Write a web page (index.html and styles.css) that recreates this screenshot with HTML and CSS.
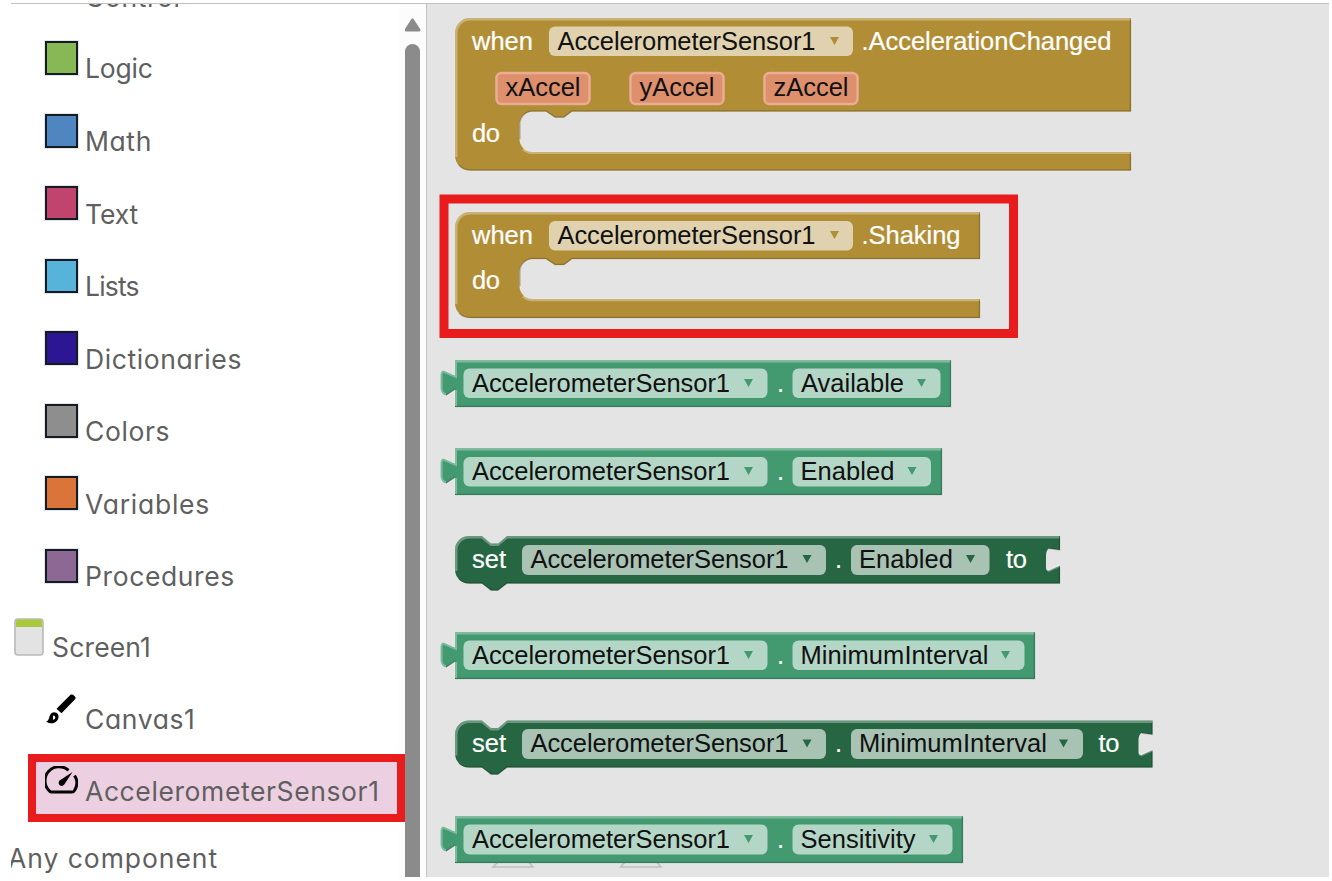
FILE: index.html
```html
<!DOCTYPE html>
<html lang="en">
<head>
<meta charset="utf-8">
<title>Blocks</title>
<link rel="stylesheet" href="styles.css">
</head>
<body>
<div class="app">
  <nav class="palette">
    <ul class="tree">
      <li class="row"><span class="swatch control"></span><span class="label t-control">Control</span></li>
      <li class="row"><span class="swatch logic"></span><span class="label t-logic">Logic</span></li>
      <li class="row"><span class="swatch math"></span><span class="label t-math">Math</span></li>
      <li class="row"><span class="swatch text"></span><span class="label t-text">Text</span></li>
      <li class="row"><span class="swatch lists"></span><span class="label t-lists">Lists</span></li>
      <li class="row"><span class="swatch dictionaries"></span><span class="label t-dictionaries">Dictionaries</span></li>
      <li class="row"><span class="swatch colors"></span><span class="label t-colors">Colors</span></li>
      <li class="row"><span class="swatch variables"></span><span class="label t-variables">Variables</span></li>
      <li class="row"><span class="swatch procedures"></span><span class="label t-procedures">Procedures</span></li>
      <li class="row screen">
        <svg class="icon screen-icon" viewBox="0 0 30 38"><rect x="1" y="1" width="28" height="36" rx="3" fill="#e3e3e3" stroke="#b9b9b9" stroke-width="1.6"/><path d="M2 9V3.500Q2 1.500 4 1.500H26Q28 1.500 28 3.500V9Z" fill="#a9c83b"/></svg>
        <span class="label t-screen">Screen1</span>
      </li>
      <li class="row">
        <svg class="icon" viewBox="0 0 33 33"><path d="M11.500 14.700L25.500 .8Q27.500 0 29.500 2T30.300 5L16.500 19.300Z"/><path d="M1 27.500C5.500 27.500 3 18.300 9 18.300C16.500 18.800 14 29.300 7 29.300C4.500 29.300 3 28.800 1 27.500Z"/><path d="M8 21.500c3-.3 3 4 0 4.200z" fill="#fff"/></svg>
        <span class="label t-canvas">Canvas1</span>
      </li>
      <li class="row selected">
        <svg class="icon" viewBox="0 0 33 33"><path d="M23.500 4.400A14 14 0 0 0 4.500 25Q5 26 6 26H27Q28.500 26 29.500 24.500A14 14 0 0 0 29.600 9.500" fill="none" stroke="#000" stroke-width="3"/><path d="M27.500 6L19.300 18.500Q17 21 14.500 19Q12.500 16.500 15 14.300Z"/></svg>
        <span class="label t-accel">AccelerometerSensor1</span>
      </li>
      <li class="row any"><span class="label t-any">Any component</span></li>
    </ul>
  </nav>
  <div class="scrollbar">
    <svg class="arrow-up" viewBox="0 0 17 14"><path d="M2 12L8.500 2L15 12Z" fill="#8b8b8b" stroke="#8b8b8b" stroke-width="3" stroke-linejoin="round"/></svg>
    <div class="thumb"></div>
  </div>
  <main class="flyout">
    <svg class="workspace" viewBox="428 4 901 873">
      <path class="ghost" d="M493 867H533L527 860H500ZM620.500 867H661L655 860H627Z"/>

      <g class="event" transform="translate(455 18)">
        <path class="body" d="M0 15A15 15 0 0 1 15 0H676V93.500H117L109 99.500H100L91 93.500H77.500A13 13 0 0 0 64.500 106.500V121A13 13 0 0 0 77.500 134H676V152.500H15A15 15 0 0 1 0 137.500Z"/>
        <path class="dark" d="M675.500 2V93H117L109 99H100L91 93H77.500A13 13 0 0 0 65 106V121M675.500 136V152H15Q8 152 4 147"/>
        <path class="light" d="M1.200 139V15A14 14 0 0 1 15 1.200H675M68 131Q72 134.800 78 134.800H675"/>
        <text x="17" y="32" textLength="61">when</text>
        <rect class="field" x="94" y="8.500" width="304" height="29.500" rx="6"/>
        <text class="ink" x="102.500" y="32" textLength="258">AccelerometerSensor1</text>
        <path class="caret" d="M375 19H384L379.500 27Z"/>
        <text x="406.500" y="32" textLength="250">.AccelerationChanged</text>
        <rect class="param" x="41.500" y="55" width="93" height="31" rx="5"/>
        <rect class="param" x="175.500" y="55" width="93" height="31" rx="5"/>
        <rect class="param" x="309.500" y="55" width="93" height="31" rx="5"/>
        <text class="ink" x="50.500" y="78" textLength="75">xAccel</text>
        <text class="ink" x="184.500" y="78" textLength="75">yAccel</text>
        <text class="ink" x="318.500" y="78" textLength="75">zAccel</text>
        <text x="17" y="123.500" textLength="28">do</text>
      </g>

      <g class="event" transform="translate(455 212)">
        <path class="body" d="M0 15A15 15 0 0 1 15 0H525V47H117L109 53H100L91 47H77.500A13 13 0 0 0 64.500 60V74A13 13 0 0 0 77.500 87H525V106H15A15 15 0 0 1 0 91Z"/>
        <path class="dark" d="M524.500 2V46.500H117L109 52.500H100L91 46.500H77.500A13 13 0 0 0 65 60V74M524.500 89V105.500H15Q8 105.500 4 101"/>
        <path class="light" d="M1.200 92V15A14 14 0 0 1 15 1.200H524M68 84Q72 88 78 88H524"/>
        <text x="17" y="32" textLength="61">when</text>
        <rect class="field" x="94" y="9" width="304" height="29.500" rx="6"/>
        <text class="ink" x="102.500" y="32" textLength="258">AccelerometerSensor1</text>
        <path class="caret" d="M375 19H384L379.500 27Z"/>
        <text x="406.500" y="32" textLength="99">.Shaking</text>
        <text x="17" y="76.500" textLength="28">do</text>
      </g>
      <rect class="frame" x="444" y="199" width="569.500" height="134.500"/>

      <g class="getter" transform="translate(455 360)">
        <path class="body" d="M0 0H496V47H0V29.500L-9 35.500Q-14 35-14.500 28V15Q-14 10-11.500 10.500L0 15.500Z"/>
        <path class="dark" d="M495.500 1V46.500H0M0 29L-9 35"/>
        <path class="light" d="M.8 46V30M-9 34.500Q-13.500 34-13.700 28V15Q-13.500 10.500-11 11.500L.8 16.500V1.200H495"/>
        <rect class="field" x="8.500" y="8.500" width="304" height="29.500" rx="6"/>
        <text class="ink" x="17" y="31.500" textLength="258">AccelerometerSensor1</text>
        <path class="caret" d="M289 19H298L293.500 27Z"/>
        <text x="322" y="31.500">.</text>
        <rect class="field" x="337.500" y="8.500" width="148" height="29.500" rx="6"/>
        <text class="ink" x="346" y="31.500" textLength="103">Available</text>
        <path class="caret" d="M462 19H471L466.500 27Z"/>
      </g>

      <g class="getter" transform="translate(455 448)">
        <path class="body" d="M0 0H487V47H0V29.500L-9 35.500Q-14 35-14.500 28V15Q-14 10-11.500 10.500L0 15.500Z"/>
        <path class="dark" d="M486.500 1V46.500H0M0 29L-9 35"/>
        <path class="light" d="M.8 46V30M-9 34.500Q-13.500 34-13.700 28V15Q-13.500 10.500-11 11.500L.8 16.500V1.200H486"/>
        <rect class="field" x="8.500" y="9" width="304" height="29.500" rx="6"/>
        <text class="ink" x="17" y="32" textLength="258">AccelerometerSensor1</text>
        <path class="caret" d="M289 19H298L293.500 27Z"/>
        <text x="322" y="32">.</text>
        <rect class="field" x="337.500" y="9" width="138.500" height="29.500" rx="6"/>
        <text class="ink" x="345.500" y="32" textLength="94">Enabled</text>
        <path class="caret" d="M452.500 19H461.500L457 27Z"/>
      </g>

      <g class="setter" transform="translate(455 536)">
        <path class="body" d="M0 14A14 14 0 0 1 14 0H27L36 7.500H43L52 0H605V14L594 12.500Q591 14 591 20V30Q591 35 594 34.500L605 29.500V47.500H52L43 54.500H36L27 47.500H14A14 14 0 0 1 0 33.500Z"/>
        <path class="light" d="M1.200 35V14A13 13 0 0 1 14 1.200H27L36 8.700H43L52 1.200H604M592 31Q592 34.500 594 34.500L605 29.500"/>
        <path class="dark" d="M604.500 31V47H52L43 54H36L27 47H14Q8 47 4 43M604.500 2V14L594 12.500"/>
        <text x="17" y="31.500" textLength="34">set</text>
        <rect class="field" x="67" y="9" width="304" height="30" rx="6"/>
        <text class="ink" x="75.500" y="31.500" textLength="258">AccelerometerSensor1</text>
        <path class="caret" d="M347.500 19H356.500L352 27Z"/>
        <text x="380" y="31.500">.</text>
        <rect class="field" x="396" y="9" width="138.500" height="30" rx="6"/>
        <text class="ink" x="404" y="31.500" textLength="94">Enabled</text>
        <path class="caret" d="M511 19H520L515.500 27Z"/>
        <text x="551" y="31.500" textLength="21">to</text>
      </g>

      <g class="getter" transform="translate(455 632)">
        <path class="body" d="M0 0H580V47H0V29.500L-9 35.500Q-14 35-14.500 28V15Q-14 10-11.500 10.500L0 15.500Z"/>
        <path class="dark" d="M579.500 1V46.500H0M0 29L-9 35"/>
        <path class="light" d="M.8 46V30M-9 34.500Q-13.500 34-13.700 28V15Q-13.500 10.500-11 11.500L.8 16.500V1.200H579"/>
        <rect class="field" x="8.500" y="8.500" width="304" height="29.500" rx="6"/>
        <text class="ink" x="17" y="31.500" textLength="258">AccelerometerSensor1</text>
        <path class="caret" d="M289 19H298L293.500 27Z"/>
        <text x="322" y="31.500">.</text>
        <rect class="field" x="337.500" y="8.500" width="232" height="29.500" rx="6"/>
        <text class="ink" x="345.500" y="31.500" textLength="188">MinimumInterval</text>
        <path class="caret" d="M546 19H555L550.500 27Z"/>
      </g>

      <g class="setter" transform="translate(455 720.500)">
        <path class="body" d="M0 14A14 14 0 0 1 14 0H27L36 7.500H43L52 0H697.500V14L686.500 12.500Q683.500 14 683.500 20V30Q683.500 35 686.500 34.500L697.500 29.500V47H52L43 54H36L27 47H14A14 14 0 0 1 0 33Z"/>
        <path class="light" d="M1.200 35V14A13 13 0 0 1 14 1.200H27L36 8.700H43L52 1.200H697M684.500 31Q684.500 34.500 686.500 34.500L697.500 29.500"/>
        <path class="dark" d="M697 31V46.500H52L43 53.500H36L27 46.500H14Q8 46.500 4 43M697 2V14L686.500 12.500"/>
        <text x="17" y="31.500" textLength="34">set</text>
        <rect class="field" x="67" y="8.500" width="304" height="30" rx="6"/>
        <text class="ink" x="75.500" y="31.500" textLength="258">AccelerometerSensor1</text>
        <path class="caret" d="M347.500 19H356.500L352 27Z"/>
        <text x="380" y="31.500">.</text>
        <rect class="field" x="396" y="8.500" width="232" height="30" rx="6"/>
        <text class="ink" x="404" y="31.500" textLength="188">MinimumInterval</text>
        <path class="caret" d="M604 19H613L608.500 27Z"/>
        <text x="643.500" y="31.500" textLength="21">to</text>
      </g>

      <g class="getter" transform="translate(455 816)">
        <path class="body" d="M0 0H508V47H0V29.500L-9 35.500Q-14 35-14.500 28V15Q-14 10-11.500 10.500L0 15.500Z"/>
        <path class="dark" d="M507.500 1V46.500H0M0 29L-9 35"/>
        <path class="light" d="M.8 46V30M-9 34.500Q-13.500 34-13.700 28V15Q-13.500 10.500-11 11.500L.8 16.500V1.200H507"/>
        <rect class="field" x="8.500" y="8.500" width="304" height="30" rx="6"/>
        <text class="ink" x="17" y="32" textLength="258">AccelerometerSensor1</text>
        <path class="caret" d="M289 19H298L293.500 27Z"/>
        <text x="322" y="32">.</text>
        <rect class="field" x="337.500" y="8.500" width="160" height="30" rx="6"/>
        <text class="ink" x="345.500" y="32" textLength="115">Sensitivity</text>
        <path class="caret" d="M474 19H483L478.500 27Z"/>
      </g>
    </svg>
  </main>
</div>
</body>
</html>
```
FILE: styles.css
```css
*, ::before { box-sizing: border-box; }

body {
  margin: 0;
  padding: 3px 3px 4px 11px;
  height: 881px;
  background: #fff;
  overflow: hidden;
}

.app {
  display: flex;
  height: 874px;
  border-top: 1px solid #c2c2c2;
}

/* Palette tree */
.palette {
  position: relative;
  width: 394px;
  overflow: hidden;
  background: linear-gradient(90deg, #fff 388px, #fcfcfc 388px);
  isolation: isolate;
}

.tree {
  list-style: none;
  margin: -35.6px 0 0;
  padding: 0;
}

.row {
  position: relative;
  display: flex;
  align-items: flex-start;
  gap: 7px;
  height: 72.55px;
  padding-left: 34px;
}

.label {
  margin-top: 9.500px;
  font: 400 26.500px/36px Inter, "Open Sans", sans-serif;
  font-feature-settings: "cv11";
  color: #5f5f5f;
  white-space: nowrap;
}

/* Tracking per entry */
.t-control { margin-top: 11px; letter-spacing: .6px; }
.t-logic { letter-spacing: -.2px; }
.t-math { letter-spacing: .6px; margin-top: 9px; }
.t-text { letter-spacing: -.1px; }
.t-lists { letter-spacing: -.8px; }
.t-dictionaries { letter-spacing: .6px; }
.t-colors { letter-spacing: .6px; }
.t-variables { letter-spacing: .75px; }
.t-procedures { letter-spacing: .6px; }
.t-screen { letter-spacing: .15px; margin-top: 8px; }
.t-canvas { letter-spacing: .6px; margin-top: 7.500px; }
.t-accel { letter-spacing: .6px; margin-top: 7px; }
.t-any { letter-spacing: .95px; }

.swatch {
  flex: none;
  width: 33px;
  height: 34px;
  border: 2px solid #141c22;
  box-shadow: 0 0 0 1px #dfe6f1;
}

.control { background: #b18e35; }
.logic { background: #88b755; }
.math { background: #4f86c0; }
.text { background: #c1446e; }
.lists { background: #58b3db; }
.dictionaries { background: #2c1694; }
.colors { background: #8e8e8e; }
.variables { background: #da7439; }
.procedures { background: #8e6895; }

.icon {
  flex: none;
  width: 33px;
  height: 33px;
}

.screen { padding-left: 3px; gap: 8px; }
.screen-icon { width: 30px; height: 38px; margin-top: -3px; }
.any { padding-left: 0; }
.any .label { margin: 1px 0 0 -3px; }

.selected::before {
  content: "";
  position: absolute;
  z-index: -1;
  left: 17px;
  top: -12px;
  width: 377px;
  height: 67.500px;
  border: 8.500px solid #e81c1c;
  background: #ecd0e1;
}

/* Scrollbar */
.scrollbar {
  display: flex;
  flex-direction: column;
  width: 22px;
  padding-top: 14px;
  background: #fcfcfc;
  border-right: 1px solid #c2c2c2;
}

.arrow-up {
  width: 17px;
  height: 14px;
  margin-left: -1px;
}

.thumb {
  flex: 1;
  width: 15px;
  margin-top: 12px;
  border-radius: 8px 8px 0 0;
  background: #8b8b8b;
}

/* Flyout blocks */
.flyout {
  flex: 1;
  background: #e4e4e4;
}

.workspace {
  display: block;
  width: 901px;
  height: 873px;
  margin-left: 1px;
  font: 25.500px "Liberation Sans", Arial, sans-serif;
}

.workspace text { fill: #fff; stroke: #fff; stroke-width: .2; }
.workspace .ink { fill: #111; stroke: none; }

.event { --block: #b18e35; --field: #e0d2ae; }
.getter { --block: #439970; --field: #b4d6c6; }
.setter { --block: #266643; --field: #a8c2b4; }

.body, .caret { fill: var(--block); }
.field { fill: var(--field); }
.light { fill: none; stroke: #fff; stroke-opacity: .32; stroke-width: 2.500; }
.dark { fill: none; stroke: #000; stroke-opacity: .2; stroke-width: 1.500; }
.param { fill: #de8f6c; stroke: #e9ad94; stroke-width: 2.500; }
.frame { fill: none; stroke: #e81c1c; stroke-width: 9; }
.ghost { fill: none; stroke: #c0c0c0; stroke-width: 1.500; }
```
